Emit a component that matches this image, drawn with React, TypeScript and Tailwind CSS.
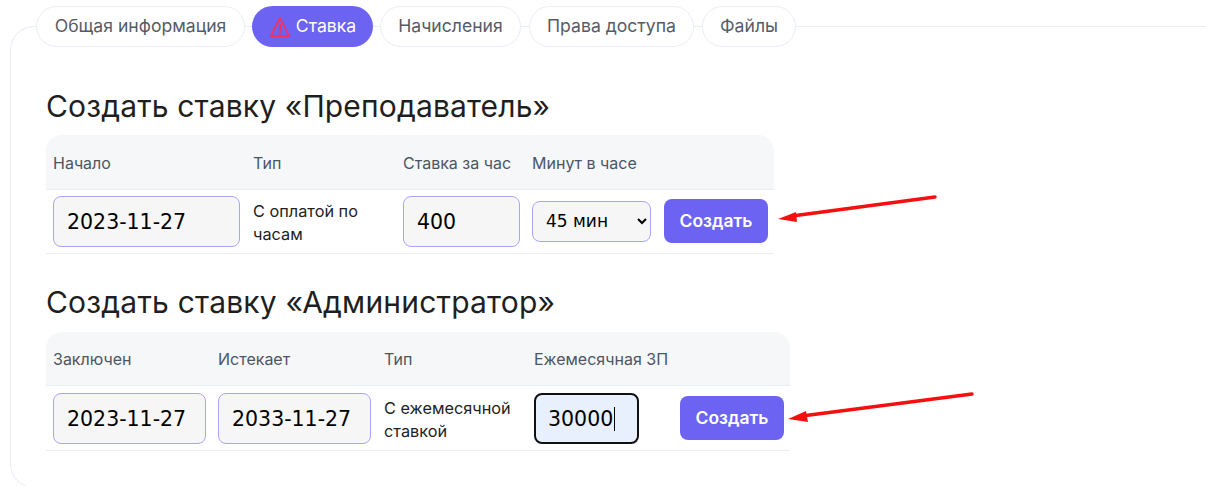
const tabClass = 'h-[41px] flex items-center justify-center rounded-full border border-[#e9edf5] bg-white text-[#555b66] text-[17.6px]';

function Arrow({ className, d, head }: { className: string; d: string; head: string }) {
  return (
    <svg className={className} width="200" height="45" viewBox="0 0 200 45" fill="none">
      <path d={d} stroke="#f50f0f" strokeWidth="3.5" strokeLinecap="round" />
      <path d={head} fill="#f50f0f" />
    </svg>
  );
}

function DateInput({ value, width }: { value: string; width: string }) {
  return (
    <input
      readOnly
      value={value}
      className={`${width} h-[51px] rounded-lg border-[1.5px] border-[#aaa4f5] bg-[#f6f6f6] px-[13px] pt-[2px] text-black outline-none`}
      style={{ fontFamily: '"DejaVu Sans", sans-serif', fontSize: 20.5 }}
    />
  );
}

function CreateButton() {
  return (
    <button className="w-[104px] h-[44px] rounded-lg bg-[#6c63f2] text-white text-[17.5px] font-semibold">
      Создать
    </button>
  );
}

export default function App() {
  return (
    <div className="h-[486px] w-[1206px] overflow-hidden bg-white font-['Inter',sans-serif]">
      <div className="relative ml-[10px] mt-[26px] h-[462px] rounded-l-[24px] border border-r-0 border-[#e9edf5]">
        {/* tabs sit over the panel's top border */}
        <div className="ml-[25px] -mt-[21px] flex gap-[7px]">
          <div className={`${tabClass} w-[209px]`}>Общая информация</div>
          <div className="h-[41px] w-[121px] flex items-center justify-center gap-[5px] rounded-full bg-[#6c63f2] text-white text-[17.6px]">
            <svg width="22" height="22" viewBox="0 0 24 24" fill="none" stroke="#f5305f" strokeWidth="1.9" strokeLinejoin="round" strokeLinecap="round">
              <path d="M12 2 2 22h20L12 2Z" />
              <path d="M12 9.5v6.5" strokeWidth="2.4" />
              <path d="M12 19v.2" strokeWidth="2.4" />
            </svg>
            Ставка
          </div>
          <div className={`${tabClass} w-[141px]`}>Начисления</div>
          <div className={`${tabClass} ml-px w-[165px]`}>Права доступа</div>
          <div className={`${tabClass} ml-px w-[94px]`}>Файлы</div>
        </div>

        <div className="ml-[35px] mt-[39px]">
          <h2 className="text-[30px] tracking-[0.15px] leading-[40px] text-[#1f1f1f]">Создать ставку «Преподаватель»</h2>
          <table className="mt-[9px] w-[728px] table-fixed border-collapse text-left">
            <colgroup>
              <col className="w-[200px]" />
              <col className="w-[150px]" />
              <col className="w-[129px]" />
              <col className="w-[132px]" />
              <col className="w-[117px]" />
            </colgroup>
            <thead>
              <tr className="h-[54px] bg-[#f6f7f9] border-b border-[#e9edf5] text-[#4b5563] text-[16px]">
                <th className="rounded-tl-2xl pl-[7px] pt-[2px] font-normal">Начало</th>
                <th className="pl-[7px] pt-[2px] font-normal">Тип</th>
                <th className="pl-[7px] pt-[2px] font-normal whitespace-nowrap">Ставка за час</th>
                <th className="pl-[7px] pt-[2px] font-normal whitespace-nowrap">Минут в часе</th>
                <th className="rounded-tr-2xl" />
              </tr>
            </thead>
            <tbody>
              <tr className="h-[64px] border-b border-[#e9edf5]">
                <td className="pl-[7px]"><DateInput value="2023-11-27" width="w-[187px]" /></td>
                <td className="pl-[7px] pt-[4px] text-[16.3px] leading-[23px] text-[#222]">С оплатой по часам</td>
                <td className="pl-[7px]"><DateInput value="400" width="w-[117px]" /></td>
                <td className="pl-[7px]">
                  <select
                    defaultValue="45"
                    className="w-[119px] h-[41px] rounded-lg border-[1.5px] border-[#aaa4f5] bg-[#f6f6f6] pl-[9px] text-black outline-none"
                    style={{ fontFamily: '"DejaVu Sans", sans-serif', fontSize: 17 }}
                  >
                    <option value="45">45 мин</option>
                    <option value="60">60 мин</option>
                  </select>
                </td>
                <td className="pl-[7px]"><CreateButton /></td>
              </tr>
            </tbody>
          </table>

          <h2 className="mt-[28px] text-[30px] tracking-[0.2px] leading-[40px] text-[#1f1f1f]">Создать ставку «Администратор»</h2>
          <table className="mt-[10px] w-[744px] table-fixed border-collapse text-left">
            <colgroup>
              <col className="w-[165px]" />
              <col className="w-[166px]" />
              <col className="w-[150px]" />
              <col className="w-[146px]" />
              <col className="w-[117px]" />
            </colgroup>
            <thead>
              <tr className="h-[54px] bg-[#f6f7f9] border-b border-[#e9edf5] text-[#4b5563] text-[16px]">
                <th className="rounded-tl-2xl pl-[7px] pt-[2px] font-normal">Заключен</th>
                <th className="pl-[7px] pt-[2px] font-normal">Истекает</th>
                <th className="pl-[7px] pt-[2px] font-normal">Тип</th>
                <th className="pl-[7px] pt-[2px] font-normal whitespace-nowrap">Ежемесячная ЗП</th>
                <th className="rounded-tr-2xl" />
              </tr>
            </thead>
            <tbody>
              <tr className="h-[65px] border-b border-[#e9edf5]">
                <td className="pl-[7px]"><DateInput value="2023-11-27" width="w-[153px]" /></td>
                <td className="pl-[7px]"><DateInput value="2033-11-27" width="w-[153px]" /></td>
                <td className="pl-[7px] pt-[4px] text-[16.3px] leading-[23px] text-[#222]">С ежемесячной ставкой</td>
                <td className="pl-[7px]">
                  <div
                    className="w-[105px] h-[51px] flex items-center rounded-lg border-2 border-[#111] bg-[#e8f0fe] px-[12px] pt-[2px] text-black"
                    style={{ fontFamily: '"DejaVu Sans", sans-serif', fontSize: 20.5 }}
                  >
                    30000<span className="ml-[1px] h-[24px] w-px bg-black" />
                  </div>
                </td>
                <td className="pl-[7px]"><CreateButton /></td>
              </tr>
            </tbody>
          </table>
        </div>

        {/* red annotation arrows drawn on top of the screenshot */}
        <Arrow className="absolute left-[759px] top-[158px]" d="M165 12 22 31" head="M8 34 26 27 27 37Z" />
        <Arrow className="absolute left-[769px] top-[358px]" d="M192 9 22 31" head="M8 34 26 26 28 37Z" />
      </div>
    </div>
  );
}
